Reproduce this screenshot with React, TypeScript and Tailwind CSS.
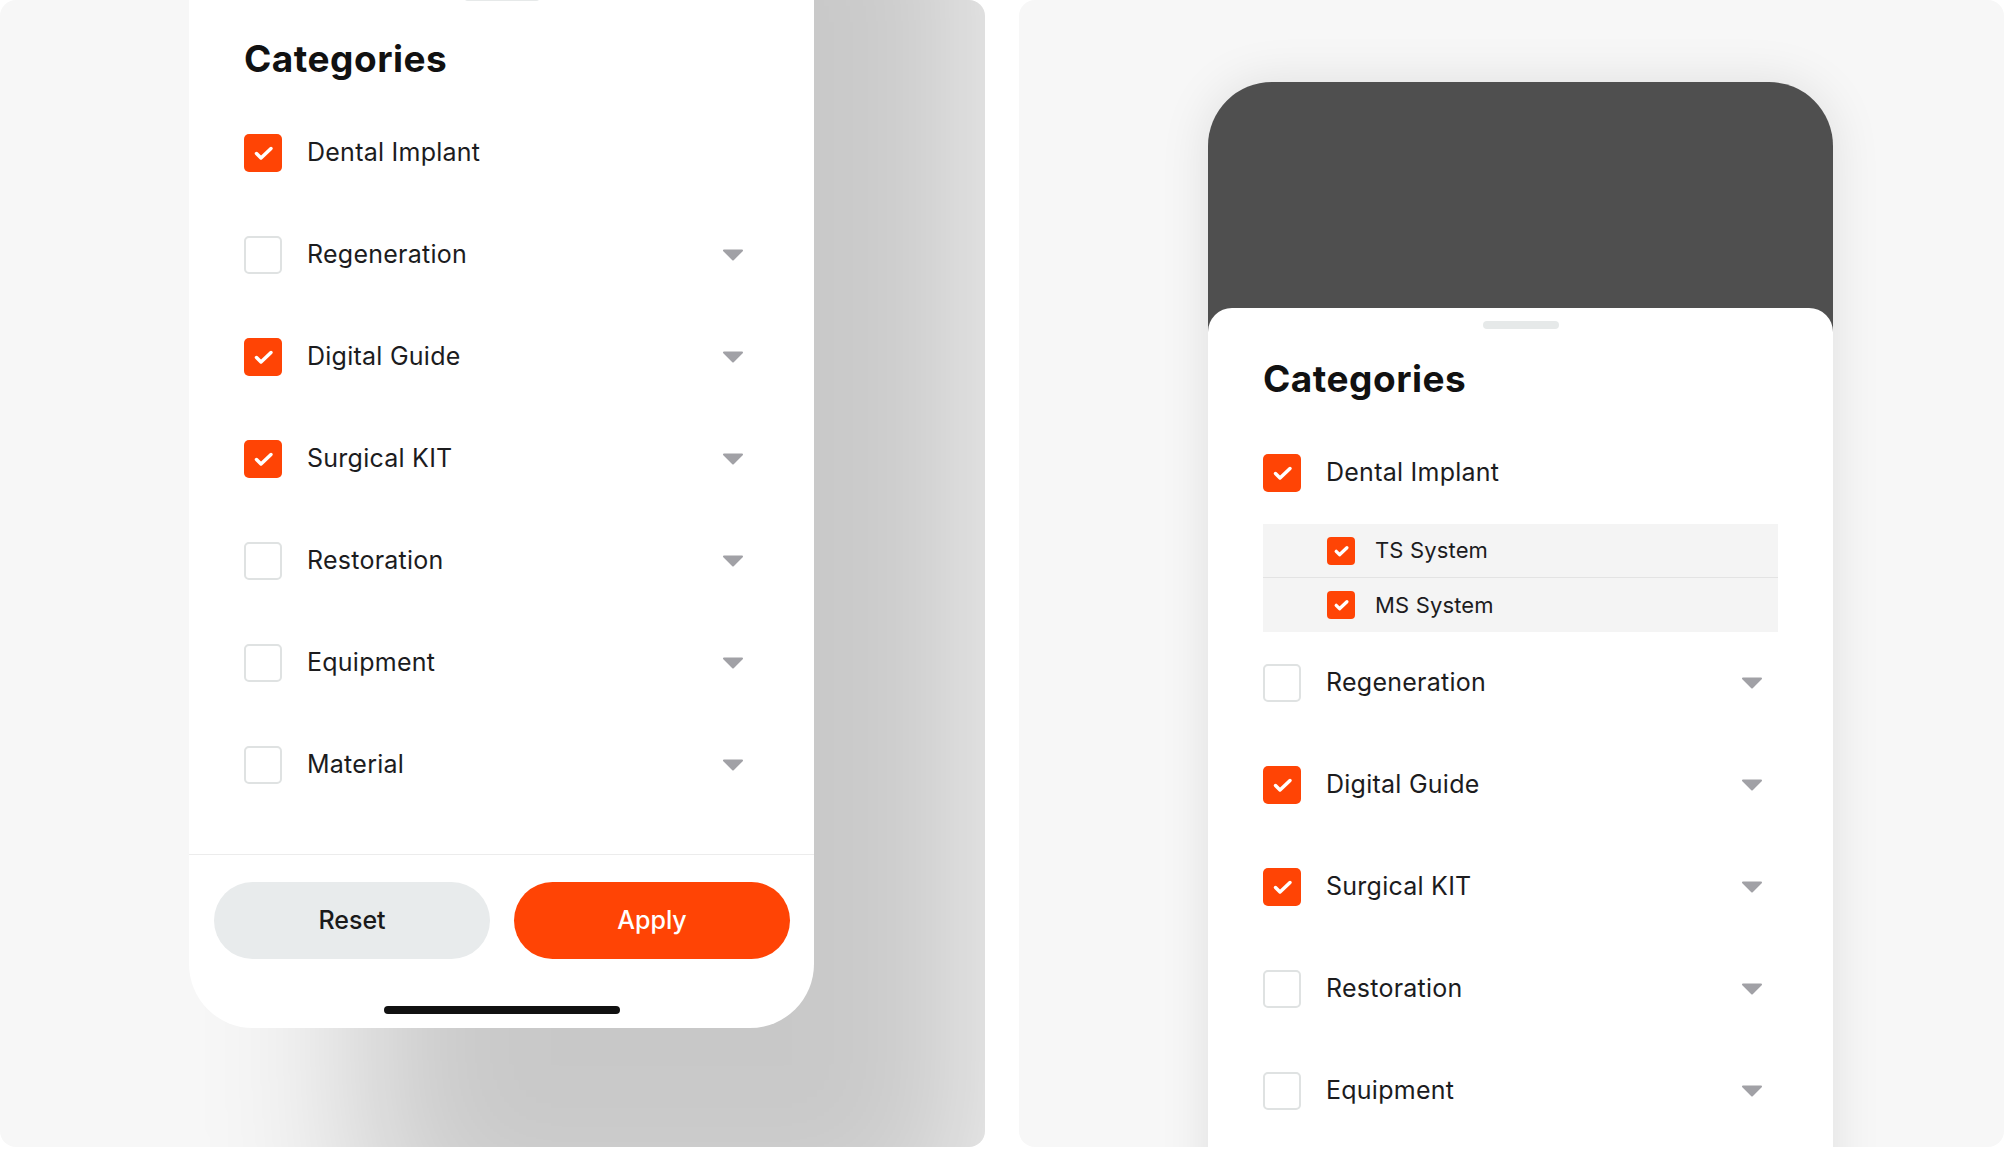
import React from "react";

type Sub = { label: string; checked: boolean };
type Item = { label: string; checked: boolean; arrow: boolean; subs?: Sub[] };

const baseItems: Item[] = [
  { label: "Dental Implant", checked: true, arrow: false },
  { label: "Regeneration", checked: false, arrow: true },
  { label: "Digital Guide", checked: true, arrow: true },
  { label: "Surgical KIT", checked: true, arrow: true },
  { label: "Restoration", checked: false, arrow: true },
  { label: "Equipment", checked: false, arrow: true },
  { label: "Material", checked: false, arrow: true },
];

// right phone: first item opened, list runs off the bottom after Equipment
const expandedItems: Item[] = baseItems
  .filter((it) => it.label !== "Material")
  .map((it) =>
    it.label === "Dental Implant"
      ? {
          ...it,
          subs: [
            { label: "TS System", checked: true },
            { label: "MS System", checked: true },
          ],
        }
      : it
  );

function Box({ checked, small }: { checked: boolean; small?: boolean }) {
  const size = small ? "w-[28px] h-[28px] rounded-[4px]" : "w-[38px] h-[38px] rounded-[5px]";
  if (!checked) {
    return <span className={`${size} shrink-0 border-2 border-[#dfe2e2] bg-white`} />;
  }
  return (
    <span className={`${size} shrink-0 bg-[#ff4405] flex items-center justify-center`}>
      <svg viewBox="0 0 38 38" className="w-full h-full" fill="none">
        <path
          d="M12.5 19.5l4.5 4.5 10-9.5"
          stroke="white"
          strokeWidth={small ? 4.5 : 3.5}
          strokeLinecap="round"
          strokeLinejoin="round"
        />
      </svg>
    </span>
  );
}

function Caret() {
  return (
    <svg width="22" height="12" viewBox="0 0 22 12" className="mr-[15px] shrink-0">
      <path d="M2 1.5h18L11 10.5z" fill="#a1a1a6" stroke="#a1a1a6" strokeWidth="2" strokeLinejoin="round" />
    </svg>
  );
}

function CategoryList({ items }: { items: Item[] }) {
  return (
    <div className="flex flex-col">
      {items.map((item) => (
        <React.Fragment key={item.label}>
          <div className="h-[102px] flex items-center gap-[25px]">
            <Box checked={item.checked} />
            <span className="flex-1 text-[25px] tracking-[0.25px] text-[#1c1c1e]">{item.label}</span>
            {item.arrow && <Caret />}
          </div>
          {item.subs && (
            <div className="bg-[#f4f4f4] flex flex-col">
              {item.subs.map((s, i) => (
                <div
                  key={s.label}
                  className={`h-[54px] flex items-center gap-[20px] pl-[64px] ${
                    i < item.subs!.length - 1 ? "border-b border-[#e3e3e3]" : ""
                  }`}
                >
                  <Box checked={s.checked} small />
                  <span className="text-[22px] tracking-[0.15px] text-[#1c1c1e]">{s.label}</span>
                </div>
              ))}
            </div>
          )}
        </React.Fragment>
      ))}
    </div>
  );
}

function Handle() {
  return <div className="mx-auto w-[76px] h-[8px] rounded-full bg-[#e6e9e9]" />;
}

function Title({ className }: { className: string }) {
  return (
    <h2 className={`${className} text-[37px] leading-[44px] tracking-[0.5px] font-bold text-[#111]`}>Categories</h2>
  );
}

export default function App() {
  return (
    <div className="w-[2004px] h-[1149px] bg-white flex gap-[34px] overflow-hidden font-['Inter',sans-serif]">
      {/* left: sheet with footer, top scrolled out of view */}
      <div className="w-[985px] h-[1147px] shrink-0 rounded-[16px] overflow-hidden bg-[#f7f7f7]">
        <div className="ml-[189px] -mt-[400px] w-[625px] bg-white rounded-t-[24px] rounded-b-[64px] pt-[393px] shadow-[170px_230px_160px_rgba(0,0,0,0.19)]">
          <Handle />
          <div className="px-[55px]">
            <Title className="mt-[36px] mb-[21px]" />
            <CategoryList items={baseItems} />
          </div>
          <div className="mt-[38px] border-t border-[#ececec] pt-[27px] pb-[14px]">
            <div className="flex gap-[24px] pl-[25px] pr-[24px]">
              <button className="flex-1 h-[77px] rounded-full bg-[#e8ebec] text-[25px] font-medium text-[#1a1a1a]">
                Reset
              </button>
              <button className="flex-1 h-[77px] rounded-full bg-[#ff4405] text-[25px] font-medium text-white">
                Apply
              </button>
            </div>
            <div className="mt-[47px] mx-auto w-[236px] h-[8px] rounded-full bg-[#111]" />
          </div>
        </div>
      </div>

      {/* right: phone with expanded category */}
      <div className="w-[985px] h-[1147px] shrink-0 rounded-[16px] overflow-hidden bg-[#f7f7f7] pt-[82px]">
        <div className="ml-[189px] w-[625px] h-[1200px] rounded-t-[64px] bg-[#4f4f4f] overflow-hidden shadow-[0_0_50px_rgba(0,0,0,0.1)] flex flex-col">
          <div className="h-[226px] shrink-0" />
          <div className="flex-1 bg-white rounded-t-[24px] pt-[13px]">
            <Handle />
            <div className="px-[55px]">
              <Title className="mt-[28px] mb-[21px]" />
              <CategoryList items={expandedItems} />
            </div>
          </div>
        </div>
      </div>
    </div>
  );
}
